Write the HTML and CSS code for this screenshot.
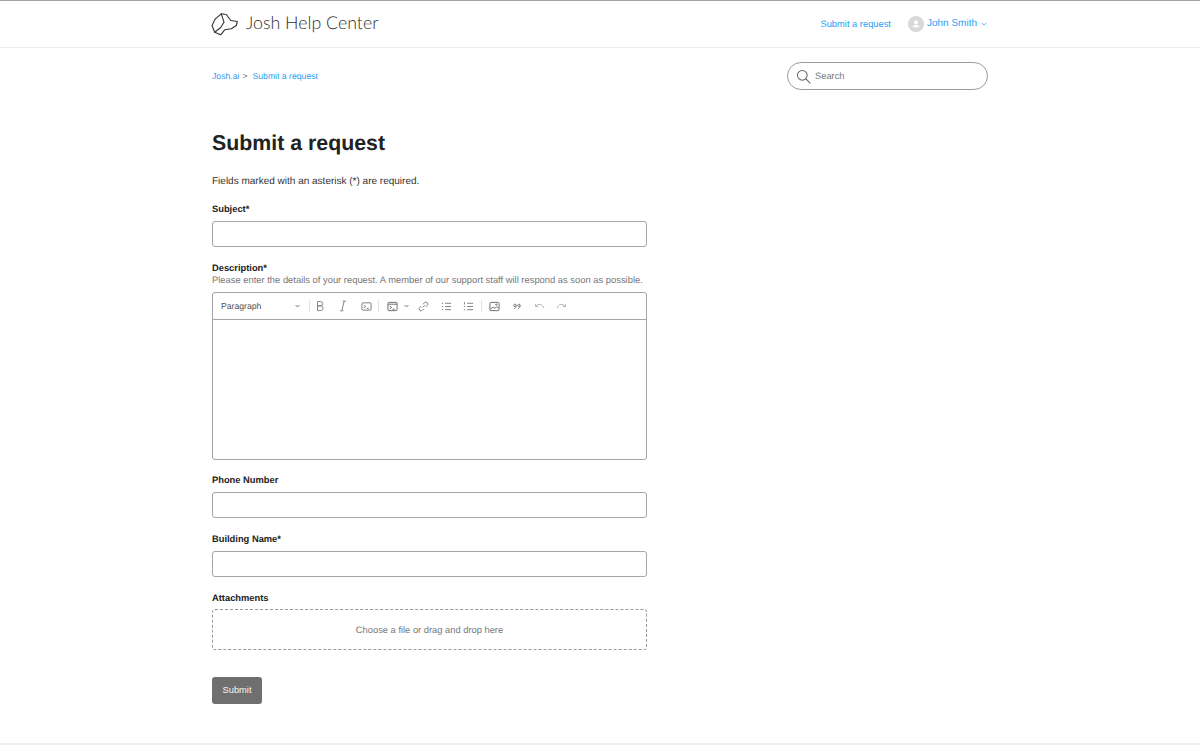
FILE: index.html
```html
<!DOCTYPE html>
<html lang="en">
<head>
<meta charset="utf-8">
<title>Submit a request – Josh Help Center</title>
<link rel="stylesheet" href="styles.css">
</head>
<body>
<header class="site-header">
  <div class="wrap header-inner">
    <a class="brand" href="#">
      <svg class="brand-logo" viewBox="0 0 27 23" width="27" height="23" fill="none" stroke="#333" stroke-width="1.1" stroke-linejoin="round" stroke-linecap="round">
        <path d="M1 12.5 4.3 5.8 10.3.8 15.3 1.5 17.7 4.8 19.7 7.5 26.3 8.5 25.3 12.5 20.3 15.8 13.7 16.8 9.7 21.8 3.7 19.2Z"/>
        <path d="M10.3.8 13 9.2 9.7 14.5 3.7 19.2"/>
      </svg>
      <span class="brand-name">Josh Help Center</span>
    </a>
    <nav class="user-nav">
      <a class="link" href="#">Submit a request</a>
      <a class="user" href="#">
        <span class="avatar">
          <svg viewBox="0 0 16 16" width="16" height="16" fill="#fff"><circle cx="8" cy="5.6" r="2.6"/><path d="M3.4 12.4c0-2.2 2.2-3.4 4.6-3.4s4.6 1.2 4.6 3.4z"/></svg>
        </span>
        <span class="user-name">John Smith</span>
        <svg class="user-caret" viewBox="0 0 8 5" width="6" height="4" fill="none" stroke="#2a9df4" stroke-width="1"><path d="M1 1l3 3 3-3"/></svg>
      </a>
    </nav>
  </div>
</header>

<main class="wrap">
  <div class="subnav">
    <ol class="breadcrumbs">
      <li><a class="link" href="#">Josh.ai</a><span class="sep">&gt;</span></li>
      <li><a class="link" href="#">Submit a request</a></li>
    </ol>
    <div class="search">
      <svg viewBox="0 0 16 16" width="15" height="15" fill="none" stroke="#666" stroke-width="1.1" stroke-linecap="round"><circle cx="6.7" cy="6.7" r="5.2"/><path d="M10.6 10.6 15 15"/></svg>
      <span class="search-text">Search</span>
    </div>
  </div>

  <h1 class="page-title">Submit a request</h1>
  <p class="required-note">Fields marked with an asterisk (*) are required.</p>

  <form class="request-form">
    <div class="field field-subject">
      <label class="label">Subject*</label>
      <div class="input"></div>
    </div>

    <div class="field field-desc">
      <label class="label label-tight">Description*</label>
      <p class="hint">Please enter the details of your request. A member of our support staff will respond as soon as possible.</p>
      <div class="editor">
        <div class="toolbar">
          <span class="format">Paragraph
            <svg viewBox="0 0 8 5" width="5" height="4" fill="none" stroke="#444" stroke-width="1.3"><path d="M1 1l3 3 3-3"/></svg>
          </span>
          <i class="tool-sep sep-a"></i>
          <svg class="tool t-bold" viewBox="0 0 10 12" width="10" height="12" fill="none" stroke="#888" stroke-width="1"><path d="M2.5 1.5h3a2.2 2.2 0 0 1 0 4.4h-3zM2.5 5.9h3.6a2.4 2.4 0 0 1 0 4.7H2.5z"/></svg>
          <svg class="tool t-italic" viewBox="0 0 10 12" width="10" height="12" fill="none" stroke="#888" stroke-width="1"><path d="M6.2 1.2 3.8 10.8M4.6 1.2h3.4M2.2 10.8h3.2"/></svg>
          <svg class="tool t-code" viewBox="0 0 12 12" width="11" height="11" fill="none" stroke="#777" stroke-width="1"><rect x="1" y="2" width="10" height="8" rx="1"/><path d="M3 4.5 5 6 3 7.5M6 8h2.5"/></svg>
          <i class="tool-sep sep-b"></i>
          <svg class="tool t-block" viewBox="0 0 12 12" width="11" height="11" fill="none" stroke="#666" stroke-width="1"><rect x="1" y="1.5" width="10" height="9" rx="1"/><path d="M1 3.5h10M3 5.5 5 7 3 8.5M6 9h2.5"/></svg>
          <svg class="tool t-caret" viewBox="0 0 8 5" width="5" height="4" fill="none" stroke="#555" stroke-width="1.3"><path d="M1 1l3 3 3-3"/></svg>
          <svg class="tool t-link" viewBox="0 0 12 12" width="11" height="11" fill="none" stroke="#777" stroke-width="1"><path d="M5 7 7.4 4.6M5.5 3.5l1.6-1.6a2 2 0 0 1 3 3L8.5 6.5M6.5 8.5l-1.6 1.6a2 2 0 0 1-3-3L3.5 5.5"/></svg>
          <svg class="tool t-ul" viewBox="0 0 12 12" width="11" height="11" fill="none" stroke="#777" stroke-width="1"><path d="M4.5 2.5H11M4.5 6H11M4.5 9.5H11M1 2.5h1.4M1 6h1.4M1 9.5h1.4"/></svg>
          <svg class="tool t-ol" viewBox="0 0 12 12" width="11" height="11" fill="none" stroke="#777" stroke-width="1"><path d="M4.5 2.5H11M4.5 6H11M4.5 9.5H11M1.6 1.2v2.6M1 6h1.4M1 9.5h1.4"/></svg>
          <i class="tool-sep sep-c"></i>
          <svg class="tool t-image" viewBox="0 0 12 12" width="11" height="11" fill="none" stroke="#666" stroke-width="1"><rect x="1" y="1.5" width="10" height="9" rx="1"/><path d="M1.5 9 4.5 6.5 6.5 8 8.5 6 10.5 8"/><circle cx="8" cy="3.9" r=".7"/></svg>
          <svg class="tool t-quote" viewBox="0 0 10 8" width="8" height="7" fill="none" stroke="#666" stroke-width="1"><circle cx="2.4" cy="2.6" r="1.5"/><path d="M3.9 2.6C3.9 4.8 3 6 1.4 6.8"/><circle cx="7.4" cy="2.6" r="1.5"/><path d="M8.9 2.6C8.9 4.8 8 6 6.4 6.8"/></svg>
          <svg class="tool t-undo" viewBox="0 0 12 8" width="11" height="7" fill="none" stroke="#aaa" stroke-width="1"><path d="M1.5 4C3 2 5 1.4 7 1.8 9 2.2 10.4 3.6 11 6M1.5 1v3h3"/></svg>
          <svg class="tool t-redo" viewBox="0 0 12 8" width="11" height="7" fill="none" stroke="#aaa" stroke-width="1"><path d="M10.5 4C9 2 7 1.4 5 1.8 3 2.2 1.6 3.6 1 6M10.5 1v3h-3"/></svg>
        </div>
        <div class="editor-body"></div>
      </div>
    </div>

    <div class="field field-phone">
      <label class="label">Phone Number</label>
      <div class="input"></div>
    </div>

    <div class="field field-building">
      <label class="label">Building Name*</label>
      <div class="input"></div>
    </div>

    <div class="field field-attach">
      <label class="label label-attach">Attachments</label>
      <div class="dropzone">Choose a file or drag and drop here</div>
    </div>

    <button class="submit" type="button">Submit</button>
  </form>
</main>
<div class="footer-line"></div>
</body>
</html>
```
FILE: styles.css
```css
* { box-sizing: border-box; }
html, body { margin: 0; padding: 0; }
body {
  height: 750px;
  overflow: hidden;
  background: #fff;
  font-family: "Liberation Sans", Arial, sans-serif;
  color: #222;
  font-size: 9.33px;
  text-rendering: geometricPrecision;
}
a { text-decoration: none; }
.link { color: #2a9df4; }
.wrap { width: 776px; margin-left: 212px; }

.site-header {
  height: 48px;
  border-top: 1px solid #a3a3a3;
  border-bottom: 1px solid #ececec;
}
.header-inner {
  height: 46px;
  display: flex;
  align-items: center;
  justify-content: space-between;
}
.brand { display: flex; align-items: center; color: #2e2e2e; margin-left: -1px; }
.brand-logo { display: block; margin-right: 8px; }
.brand-name { font-family: Lato, sans-serif; font-weight: 300; font-size: 17.8px; margin-bottom: 4px; }
.user-nav { display: flex; align-items: center; font-size: 9.33px; margin-bottom: 1px; }
.user { display: flex; align-items: center; margin-left: 17px; margin-right: 1px; color: #2a9df4; }
.avatar {
  width: 16px; height: 16px; border-radius: 50%;
  background: #d8d8d8;
  display: flex; align-items: center; justify-content: center;
  margin-right: 3px;
}
.avatar svg { width: 12px; height: 12px; }
.user-name { font-size: 10px; }
.user-caret { margin-left: 4px; }

.subnav {
  display: flex;
  align-items: center;
  justify-content: space-between;
  height: 28px;
  margin-top: 14px;
}
.breadcrumbs { display: flex; list-style: none; margin: 0 0 1px; padding: 0; font-size: 8.67px; }
.sep { margin: 0 5px 0 3px; color: #555; }
.search {
  width: 201px; height: 28px;
  border: 1px solid #9b9ba3;
  border-radius: 14px;
  display: flex; align-items: center;
  padding-left: 8px;
}
.search-text { margin: 0 0 1px 4px; font-size: 9.33px; color: #777; }

.page-title { margin: 39px 0 0; font-size: 21.33px; line-height: 28px; font-weight: 700; color: #222; }
.required-note { margin: 18px 0 0; font-size: 10px; line-height: 14px; color: #333; }

.request-form { width: 435px; }
.field { display: block; }
.field-subject { margin-top: 13px; }
.field-desc { margin-top: 14px; }
.field-phone { margin-top: 13px; }
.field-building { margin-top: 14px; }
.field-attach { margin-top: 14px; }
.label { display: block; padding-top: 1px; font-size: 9.33px; line-height: 13px; font-weight: 700; color: #222; margin-bottom: 5px; }
.label-tight { margin-bottom: 0; line-height: 12px; }
.label-attach { margin-bottom: 4px; }
.hint { margin: 0 0 5px; font-size: 9.38px; line-height: 13px; color: #777; white-space: nowrap; }
.input { height: 26px; border: 1px solid #a5a5ab; border-radius: 3px; background: #fff; }
.editor { border: 1px solid #a5a5ab; border-radius: 3px; height: 168px; }
.toolbar {
  height: 27px;
  border-bottom: 1px solid #a5a5ab;
  display: flex;
  align-items: center;
}
.format {
  width: 79px; margin-left: 8px;
  display: flex; align-items: center; justify-content: space-between;
  font-size: 8.67px; color: #555;
}
.tool { display: block; flex: none; }
.tool-sep { display: block; flex: none; width: 1px; height: 12px; background: #e2e2e2; }
.sep-a { margin-left: 9px; }
.t-bold { margin-left: 5px; }
.t-italic { margin-left: 13px; }
.t-code { margin-left: 13px; }
.sep-b { margin-left: 6px; }
.t-block { margin-left: 8px; }
.t-caret { margin-left: 6px; }
.t-link { margin-left: 9px; }
.t-ul { margin-left: 12px; }
.t-ol { margin-left: 11px; }
.sep-c { margin-left: 7px; }
.t-image { margin-left: 7px; }
.t-quote { margin-left: 13px; }
.t-undo { margin-left: 13px; }
.t-redo { margin-left: 11px; }
.editor-body { height: 139px; }
.dropzone {
  height: 41px;
  border: 1px dashed #999;
  border-radius: 3px;
  display: flex; align-items: center; justify-content: center;
  font-size: 9.33px; color: #777;
}
.submit {
  display: block;
  margin-top: 27px;
  width: 50px; height: 27px;
  border: 0; border-radius: 3px;
  background: #6f6f6f; color: #f4f4f4;
  font: 9.33px "Liberation Sans", Arial, sans-serif;
  padding: 0 0 2px;
}
.footer-line { height: 2px; margin-top: 39px; background: #efefef; }
```
